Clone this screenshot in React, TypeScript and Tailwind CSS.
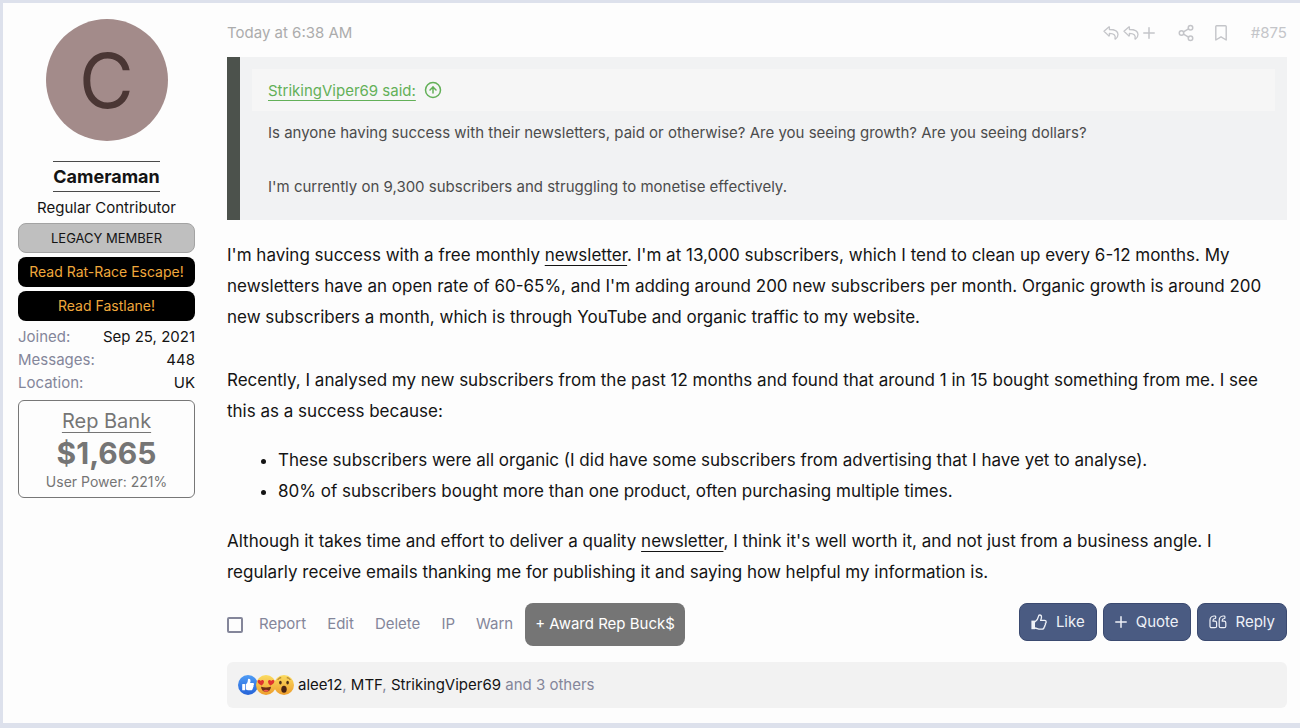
import type { ReactNode } from "react";
import { CircleArrowUp, Share2 } from "lucide-react";

function ReplyIcon() {
  return (
    <svg viewBox="0 0 16 14" className="h-[14px] w-4" fill="none" stroke="currentColor" strokeWidth="1.300" strokeLinejoin="round" aria-hidden="true">
      <path d="M1 5.300 5.800 1c.3-.200.6-.1.6.300v2.200C11 3.500 15 4.600 15 8.600c0 1.900-1 3.400-2.400 4.400-.4.200-.7 0-.6-.4 1-3.300-1.200-5.200-5.600-5.300v2.300c0 .4-.3.500-.6.300Z" />
    </svg>
  );
}

function PlusIcon() {
  return (
    <svg viewBox="0 0 12 12" className="size-3" fill="none" stroke="currentColor" strokeWidth="1.500" strokeLinecap="round" aria-hidden="true">
      <path d="M6 .8v10.400M.8 6h10.400" />
    </svg>
  );
}

function BookmarkIcon() {
  return (
    <svg viewBox="0 0 12 16" className="h-4 w-3" fill="none" stroke="currentColor" strokeWidth="1.400" strokeLinejoin="round" aria-hidden="true">
      <path d="M.8 15V1.600c0-.5.3-.8.8-.8h8.800c.5 0 .8.300.8.800V15L6 11.800Z" />
    </svg>
  );
}

function ThumbIcon() {
  return (
    <svg viewBox="0 0 16 16" className="size-4" fill="none" stroke="currentColor" strokeWidth="1.300" strokeLinejoin="round" aria-hidden="true">
      <path d="M.4 6.600h3.600v8.600H.4Z" fill="currentColor" stroke="none" />
      <path d="M3.800 8C6 6.500 7 4.900 7.300 2.800 7.500 1.600 8 1 8.800 1c1.100 0 1.700.9 1.700 2.100 0 1.300-.5 2.200-.9 3.300h4c1 0 1.600.7 1.600 1.500 0 .7-.3 1.200-.8 1.500.3.900 0 1.700-.6 2.100.1.900-.2 1.500-.8 1.900 0 1.200-.9 1.800-2.200 1.800H9c-2 0-3-1-5.200-1.200" />
    </svg>
  );
}

function QuoteIcon() {
  return (
    <svg viewBox="0 0 18 14" className="h-[14px] w-[18px]" fill="none" stroke="currentColor" strokeWidth="1.200" strokeLinejoin="round" aria-hidden="true">
      <path d="M1 5.500C1 2.900 2.600 1.200 5 1h.9c.5 0 .8.3.8.7v1c0 .5-.3.700-.7.800-1.300.1-2 .8-2 2v.7H6c1 0 1.600.6 1.600 1.500v3.500c0 .9-.6 1.500-1.600 1.500H2.600C1.600 12.700 1 12.100 1 11.200Z" />
      <path d="M10.200 5.500c0-2.600 1.600-4.300 4-4.500h.9c.5 0 .8.3.8.7v1c0 .5-.3.700-.7.800-1.300.1-2 .8-2 2v.7h2c1 0 1.600.6 1.600 1.500v3.500c0 .9-.6 1.500-1.600 1.500h-3.400c-1 0-1.600-.6-1.600-1.500Z" />
    </svg>
  );
}

function LikeFace() {
  return (
    <svg viewBox="0 0 20 20" className="size-5" role="img" aria-label="Like">
      <defs>
        <linearGradient id="like" x1="0" y1="0" x2="0" y2="1">
          <stop offset="0" stopColor="#4f9cf5" />
          <stop offset="1" stopColor="#2563d8" />
        </linearGradient>
      </defs>
      <circle cx="10" cy="10" r="10" fill="url(#like)" />
      <rect x="4.200" y="8.900" width="2.900" height="6.400" rx=".6" fill="#fff" />
      <path fill="#fff" d="M7.800 9.200c1.500-1.200 2-2.500 2.100-4.300 0-.8.500-1.100 1-1.100 1 0 1.600.9 1.600 2.100 0 .9-.2 1.500-.5 2.200h2.700c.8 0 1.300.5 1.300 1.100 0 .5-.2.800-.6 1.100.5.700.3 1.500-.3 1.900.2.700 0 1.300-.6 1.600.1 1-.6 1.500-1.700 1.500h-2c-1.300 0-2-.3-3-.8Z" />
    </svg>
  );
}

function FaceGradient({ id }: { id: string }) {
  return (
    <defs>
      <linearGradient id={id} x1="0" y1="0" x2="0" y2="1">
        <stop offset="0" stopColor="#fbdc62" />
        <stop offset="1" stopColor="#ee9d2b" />
      </linearGradient>
    </defs>
  );
}

function LoveFace() {
  return (
    <svg viewBox="0 0 20 20" className="size-5" role="img" aria-label="Love">
      <FaceGradient id="love" />
      <circle cx="10" cy="10" r="10" fill="url(#love)" />
      <path fill="#e0342f" d="M5.800 10.500C3.700 9.600 1.400 8 1.600 6.300c.2-1.600 2.400-1.900 3.200-.4 1-1.400 3.100-.9 3.200.7.100 1.500-1.100 3-2.200 3.900ZM14.200 10.500c2.100-.9 4.400-2.500 4.200-4.200-.2-1.600-2.400-1.900-3.200-.4-1-1.400-3.100-.9-3.200.7-.1 1.500 1.100 3 2.200 3.900Z" />
      <path fill="#6b2c16" d="M5 11.800c3.200.9 6.800.9 10 0-.2 3-2.200 5-5 5s-4.800-2-5-5Z" />
      <path fill="#f05a4c" d="M7 15.700c1.500-1.300 4.500-1.300 6 0-1.700 1.500-4.300 1.500-6 0Z" />
    </svg>
  );
}

function WowFace() {
  return (
    <svg viewBox="0 0 20 20" className="size-5" role="img" aria-label="Wow">
      <FaceGradient id="wow" />
      <circle cx="10" cy="10" r="10" fill="url(#wow)" />
      <ellipse cx="6.400" cy="7.600" rx="1.300" ry="1.900" fill="#4a2c18" />
      <ellipse cx="13.600" cy="7.600" rx="1.300" ry="1.900" fill="#4a2c18" />
      <ellipse cx="10" cy="14.300" rx="2.700" ry="3.500" fill="#4a2413" />
      <path d="M4 4.400c.5-1 1.600-1.700 2.800-1.600M16 4.400c-.5-1-1.600-1.700-2.800-1.600" stroke="#8a5a1c" strokeWidth=".9" fill="none" strokeLinecap="round" />
    </svg>
  );
}

const stats = [
  ["Joined:", "Sep 25, 2021"],
  ["Messages:", "448"],
  ["Location:", "UK"],
];

function Sidebar() {
  return (
    <aside className="flex w-[177px] shrink-0 flex-col items-stretch text-center">
      <a href="#profile" aria-label="Cameraman" className="flex size-[122px] items-center justify-center self-center rounded-full bg-[#a38b8a] text-[75px] leading-none text-[#4a3634]">
        C
      </a>
      <h4 className="mt-5 flex h-[31px] items-center self-center border-y border-[#4a4a4a] text-lg font-bold text-[#141414]">
        <a href="#profile">Cameraman</a>
      </h4>
      <div className="mt-1 text-[15px] leading-6">Regular Contributor</div>
      <div className="mt-[3px] flex flex-col gap-1 text-sm">
        <div className="flex h-[30px] items-center justify-center rounded-lg border border-[#a3a3a3] bg-[#bfbfbf] text-[13px]">LEGACY MEMBER</div>
        <a href="#escape" className="flex h-[30px] items-center justify-center rounded-lg bg-black text-[#f0a83c]">Read Rat-Race Escape!</a>
        <a href="#fastlane" className="flex h-[30px] items-center justify-center rounded-lg bg-black text-[#f0a83c]">Read Fastlane!</a>
      </div>
      <dl className="mt-1 text-[15px] leading-[23px]">
        {stats.map(([k, v]) => (
          <div key={k} className="flex justify-between">
            <dt className="text-[#84869a]">{k}</dt>
            <dd>{v}</dd>
          </div>
        ))}
      </dl>
      <div className="mt-[6px] rounded-md border border-[#777] pt-1 pb-[3px] text-[#757575]">
        <a href="#rep" className="block text-xl leading-8 underline decoration-1 underline-offset-4">Rep Bank</a>
        <div className="text-3xl leading-8 font-bold">$1,665</div>
        <div className="text-sm leading-[25px]">User Power: 221%</div>
      </div>
    </aside>
  );
}

function BlueButton({ icon, children }: { icon: ReactNode; children: ReactNode }) {
  return (
    <button type="button" className="flex h-[38px] items-center gap-[9px] rounded-lg border border-[#3b4a70] bg-[#4a5b82] px-[11px] text-[#eef1f7]">
      {icon}
      {children}
    </button>
  );
}

function TermLink() {
  return (
    <a href="#newsletter" className="underline decoration-1 underline-offset-4">newsletter</a>
  );
}

export default function App() {
  return (
    <div className="min-h-screen bg-[#dde1ec] pt-[3px] pb-[5px] pl-[3px] font-['Inter',sans-serif] text-[#141414]">
      <article className="flex gap-8 bg-[#fdfdfd] pt-4 pr-[13px] pb-[15px] pl-[15px]">
        <Sidebar />
        <div className="min-w-0 flex-1">
          <header className="flex h-[38px] items-start justify-between text-[15px] leading-7 text-[#acacac]">
            <time>Today at 6:38 AM</time>
            <div className="flex h-7 items-center text-[#c4c5c9]">
              <button type="button" aria-label="Multi reply" className="flex items-center gap-1">
                <ReplyIcon />
                <ReplyIcon />
                <PlusIcon />
              </button>
              <button type="button" aria-label="Share" className="ml-[22px]">
                <Share2 size={18} strokeWidth={2} />
              </button>
              <button type="button" aria-label="Bookmark" className="ml-5">
                <BookmarkIcon />
              </button>
              <a href="#875" className="ml-6">#875</a>
            </div>
          </header>

          <blockquote className="border-l-[13px] border-[#4c524c] bg-[#f1f2f3] pt-3 pr-3 pb-5 pl-3 text-[15px] leading-[27px] text-[#4c4c4c]">
            <div className="flex h-[42px] items-center gap-2 bg-[#f6f6f6] px-4 text-[#63b058]">
              <a href="#quoted" className="underline decoration-1 underline-offset-4">StrikingViper69 said:</a>
              <CircleArrowUp size={18} strokeWidth={2} />
            </div>
            <div className="space-y-[27px] px-4 pt-2">
              <p>Is anyone having success with their newsletters, paid or otherwise? Are you seeing growth? Are you seeing dollars?</p>
              <p>I'm currently on 9,300 subscribers and struggling to monetise effectively.</p>
            </div>
          </blockquote>

          <div className="mt-5 text-[17px] leading-[31px]">
            <p>
              I'm having success with a free monthly <TermLink />. I'm at 13,000 subscribers, which I tend to clean up every 6-12 months. My newsletters have an open rate of 60-65%, and I'm adding around 200 new subscribers per month. Organic growth is around 200 new subscribers a month, which is through YouTube and organic traffic to my website.
            </p>
            <p className="mt-8">
              Recently, I analysed my new subscribers from the past 12 months and found that around 1 in 15 bought something from me. I see this as a success because:
            </p>
            <ul className="mt-[18px] mb-[19px] list-disc pl-[51px]">
              <li>These subscribers were all organic (I did have some subscribers from advertising that I have yet to analyse).</li>
              <li>80% of subscribers bought more than one product, often purchasing multiple times.</li>
            </ul>
            <p className="pr-4">
              Although it takes time and effort to deliver a quality <TermLink />, I think it's well worth it, and not just from a business angle. I regularly receive emails thanking me for publishing it and saying how helpful my information is.
            </p>
          </div>

          <footer className="mt-[15px] flex items-start justify-between text-[15px]">
            <div className="flex items-center text-[#84869a]">
              <input type="checkbox" aria-label="Select post" className="mr-4 size-4 appearance-none rounded-xs border-2 border-[#84869a]" />
              <div className="flex gap-[21px]">
                <a href="#report">Report</a>
                <a href="#edit">Edit</a>
                <a href="#delete">Delete</a>
                <a href="#ip">IP</a>
                <a href="#warn">Warn</a>
              </div>
              <button type="button" className="ml-3 h-[43px] rounded-lg bg-[#757575] px-[10px] text-white">+ Award Rep Buck$</button>
            </div>
            <div className="flex gap-[6px]">
              <BlueButton icon={<ThumbIcon />}>Like</BlueButton>
              <BlueButton icon={<PlusIcon />}>Quote</BlueButton>
              <BlueButton icon={<QuoteIcon />}>Reply</BlueButton>
            </div>
          </footer>

          <div className="mt-4 flex h-[46px] items-center rounded-md bg-[#f2f2f2] pl-[11px] text-[15px]">
            <div className="mr-1 flex -space-x-[2px]">
              <LikeFace />
              <LoveFace />
              <WowFace />
            </div>
            <a href="#reactions" className="text-[#84869a]">
              <span className="text-[#141414]">alee12</span>, <span className="text-[#141414]">MTF</span>, <span className="text-[#141414]">StrikingViper69</span> and 3 others
            </a>
          </div>
        </div>
      </article>
    </div>
  );
}
